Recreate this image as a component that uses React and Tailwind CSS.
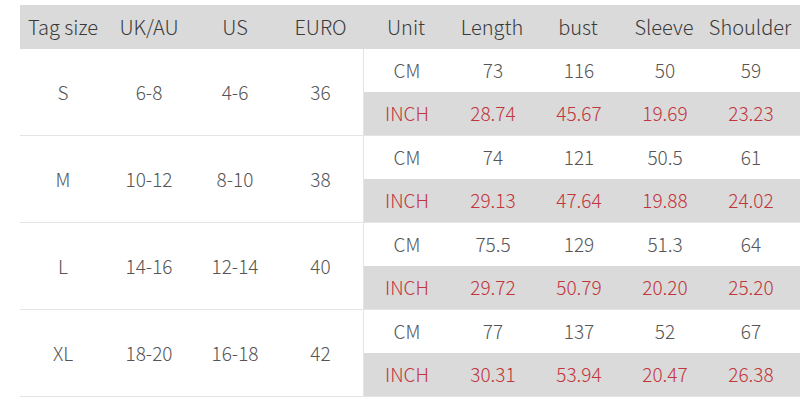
import React from "react";

const sizes = [
  { tag: "S", uk: "6-8", us: "4-6", euro: "36", cm: ["73", "116", "50", "59"], inch: ["28.74", "45.67", "19.69", "23.23"] },
  { tag: "M", uk: "10-12", us: "8-10", euro: "38", cm: ["74", "121", "50.5", "61"], inch: ["29.13", "47.64", "19.88", "24.02"] },
  { tag: "L", uk: "14-16", us: "12-14", euro: "40", cm: ["75.5", "129", "51.3", "64"], inch: ["29.72", "50.79", "20.20", "25.20"] },
  { tag: "XL", uk: "18-20", us: "16-18", euro: "42", cm: ["77", "137", "52", "67"], inch: ["30.31", "53.94", "20.47", "26.38"] },
];

const headers = ["Tag size", "UK/AU", "US", "EURO", "Unit", "Length", "bust", "Sleeve", "Shoulder"];

export default function App() {
  return (
    <div
      className="w-[800px] h-[400px] bg-white pl-5 pt-[5px] font-light text-[19px] text-[#555]"
      style={{ fontFamily: '"Noto Sans CJK SC", "Noto Sans", sans-serif' }}
    >
      {/* Header */}
      <div className="grid grid-cols-[86px_86px_86px_85px_86px_86px_86px_86px_86px] h-[44px] bg-[#dadada] text-[#3a3a3a] text-[20px] items-center">
        {headers.map((h) => (
          <div key={h} className="text-center whitespace-nowrap">{h}</div>
        ))}
      </div>

      {/* Body */}
      {sizes.map((s) => (
        <div key={s.tag} className="flex border-b border-[#e4e4e4]">
          <div className="grid grid-cols-[86px_86px_86px_85px] items-center text-center h-[86px] border-r border-[#e4e4e4]">
            <div>{s.tag}</div>
            <div>{s.uk}</div>
            <div>{s.us}</div>
            <div>{s.euro}</div>
          </div>
          <div className="flex-1 flex flex-col">
            <div className="grid grid-cols-[86px_86px_86px_86px_86px] h-[43px] items-center text-center">
              <div>CM</div>
              {s.cm.map((v, i) => (
                <div key={i}>{v}</div>
              ))}
            </div>
            <div className="grid grid-cols-[86px_86px_86px_86px_86px] h-[43px] items-center text-center bg-[#dadada] text-[#c1363c]">
              <div>INCH</div>
              {s.inch.map((v, i) => (
                <div key={i}>{v}</div>
              ))}
            </div>
          </div>
        </div>
      ))}
    </div>
  );
}
